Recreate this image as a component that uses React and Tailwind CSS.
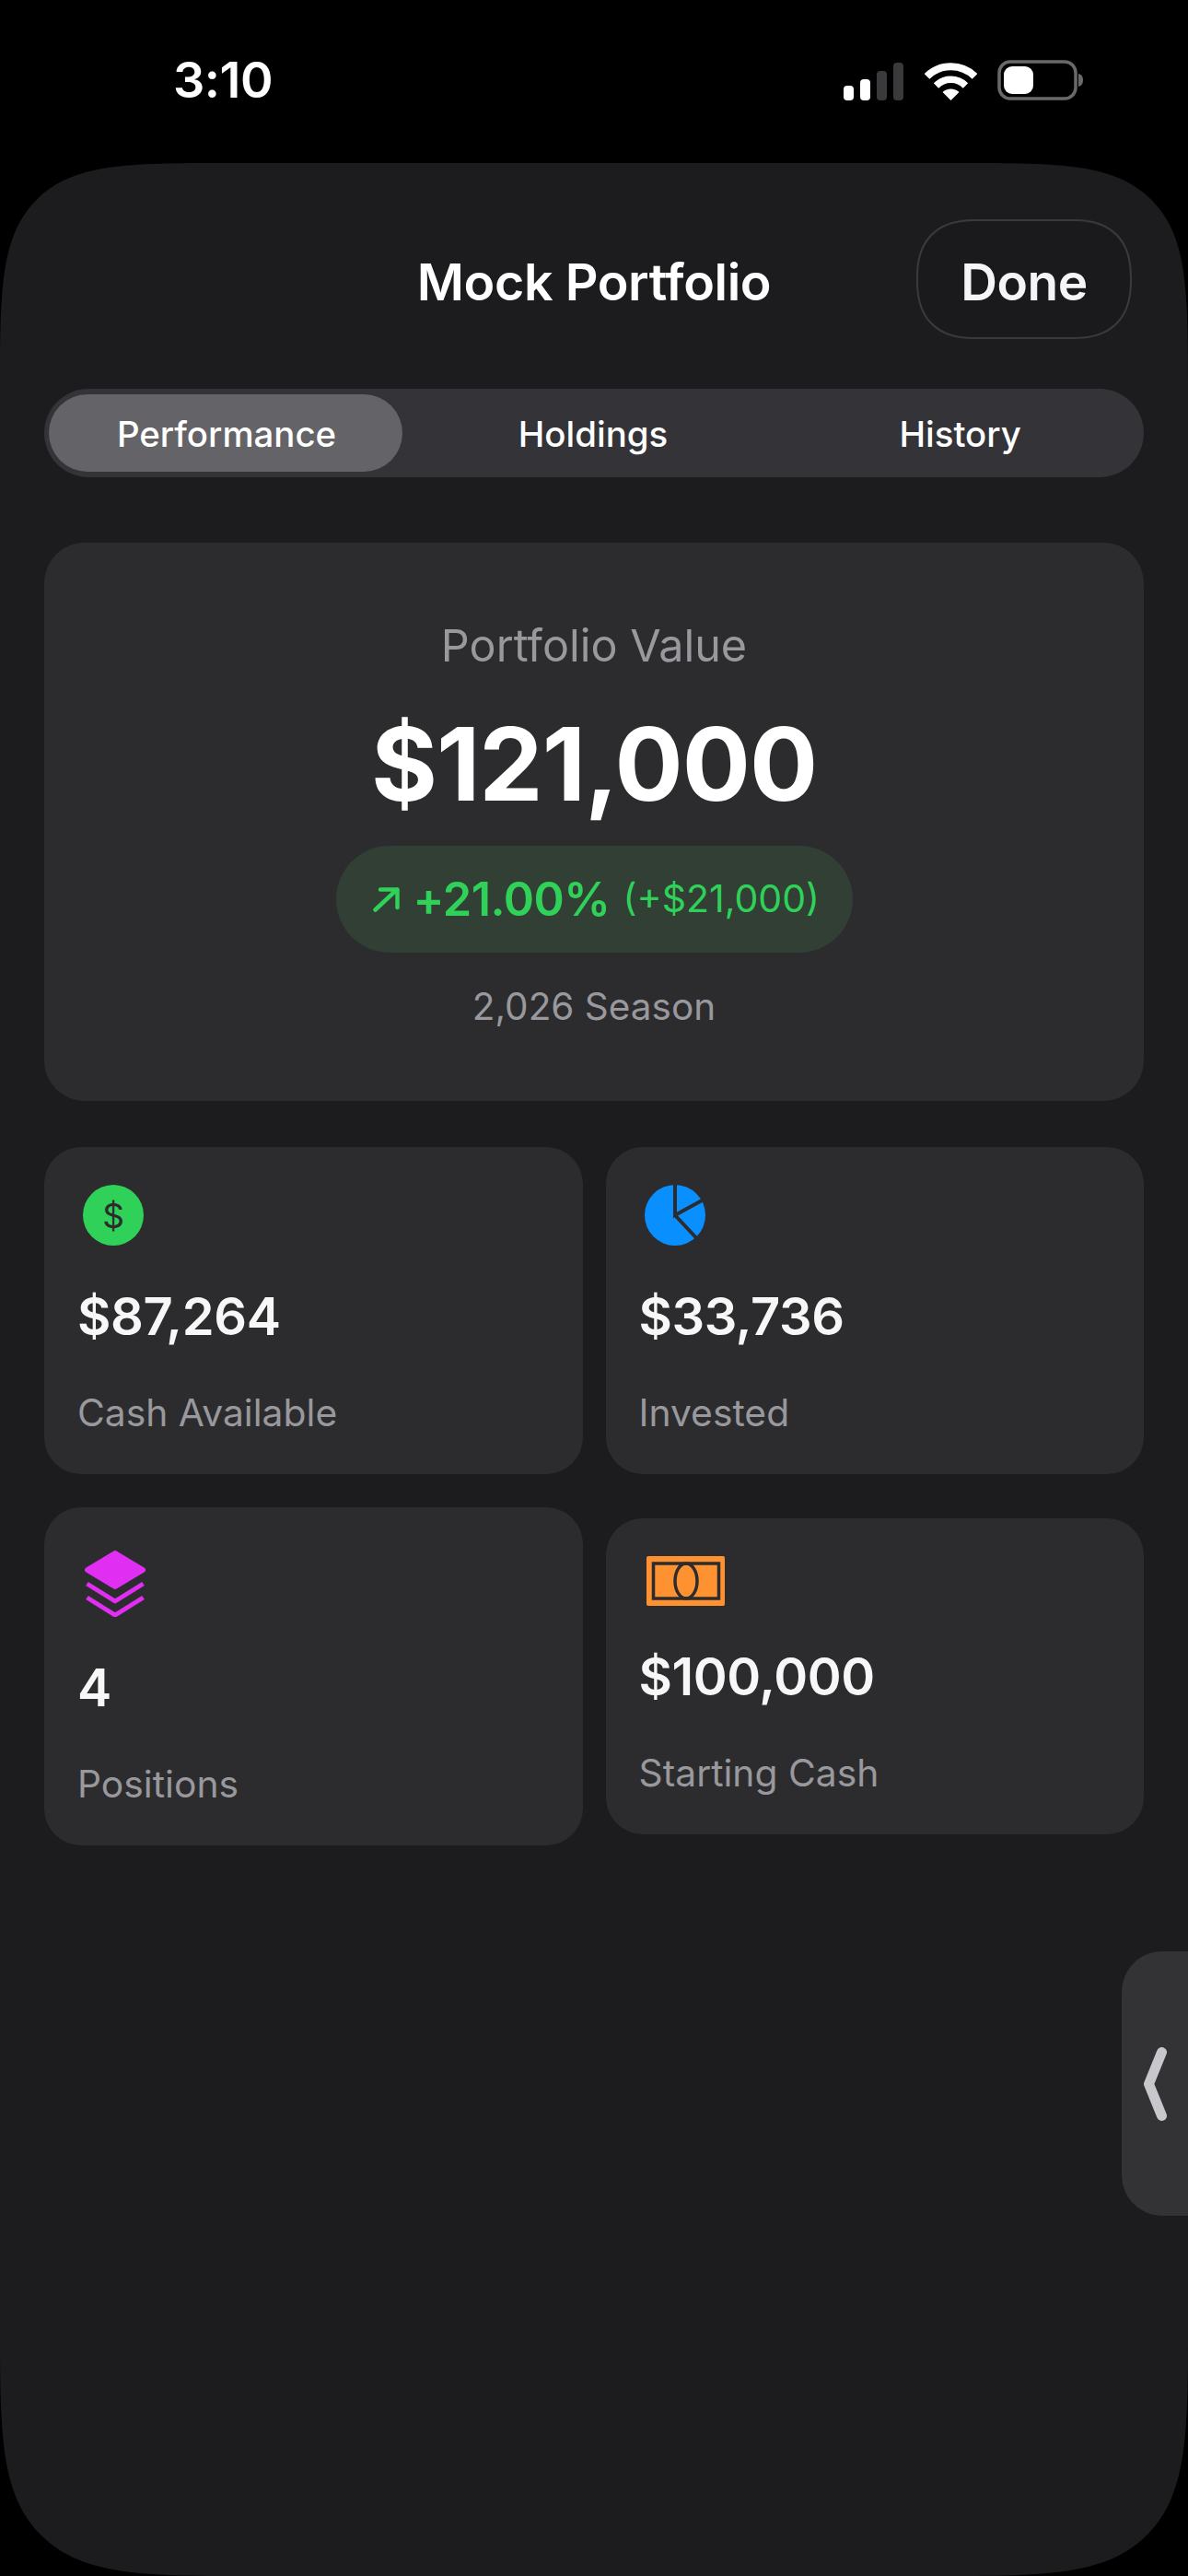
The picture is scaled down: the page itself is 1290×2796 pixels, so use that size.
export default function App() {
  return (
    <div className="relative h-[2796px] w-[1290px] overflow-hidden bg-black font-['Inter','Liberation_Sans',sans-serif] text-white">
      <StatusBar />
      <main className="flex h-[2619px] flex-col rounded-t-[250px] rounded-b-[280px] bg-[#1c1c1e] px-[48px] [corner-shape:squircle]">
        <header className="mx-[13px] mt-[61px] grid h-[130px] grid-cols-[234px_1fr_234px] items-center">
          <div />
          <h1 className="pt-[5px] text-center text-[55.5px] leading-[66px] font-semibold tracking-[-0.4px]">Mock Portfolio</h1>
          <button className="h-[130px] rounded-[65px] border-2 border-[#3a3a3c] bg-[#1a1a1c] pt-[5px] text-[55px] leading-[66px] font-semibold tracking-[-0.5px] text-[#f5f5f7] [corner-shape:superellipse(1.3)]">Done</button>
        </header>

        <nav className="mt-[54px] grid h-[96px] grid-cols-3 items-center rounded-[48px] bg-[#343438] px-[5px] text-[38.4px] leading-[50px] font-medium">
          <div className="flex h-[84px] w-[384px] items-center justify-center rounded-[42px] bg-[#636368] pt-[2px] pl-[2px]">Performance</div>
          <div className="pt-[2px] pr-[2px] text-center">Holdings</div>
          <div className="pt-[2px] pl-[6px] text-center">History</div>
        </nav>

        <section className="mt-[71px] flex h-[606px] flex-col items-center rounded-[44px] bg-[#2c2c2e] pt-[82px]">
          <div className="text-[48.5px] leading-[60px] text-[#98989d]">Portfolio Value</div>
          <div className="mt-[38px] text-[110px] leading-[120px] font-bold tracking-[-1px]">$121,000</div>
          <div className="mt-[29px] flex h-[116px] w-[561px] items-center rounded-[58px] bg-[#313f35] pl-[40px] text-[#30d158]">
            <svg viewBox="0 0 29 27" className="h-[27px] w-[29px]" fill="none" stroke="currentColor" strokeWidth="4.5" strokeLinecap="round" strokeLinejoin="round">
              <path d="M2.5 24.5 L26 2.5 M8 2.5 H26.5 V22" />
            </svg>
            <span className="ml-[15px] text-[50.5px] font-semibold tracking-[-0.5px]">+21.00%</span>
            <span className="ml-[14px] text-[41px]">(+$21,000)</span>
          </div>
          <div className="mt-[29px] text-[40.5px] leading-[60px] text-[#98989d]">2,026 Season</div>
        </section>

        <div className="mt-[50px] grid grid-cols-2 items-center gap-x-[25px] gap-y-[36px]">
          <Stat value="$87,264" label="Cash Available" icon={<Coin />} />
          <Stat value="$33,736" label="Invested" icon={<Pie />} />
          <Stat value="4" label="Positions" icon={<Layers />} />
          <Stat value="$100,000" label="Starting Cash" icon={<Bill />} />
        </div>
      </main>

      <aside className="absolute top-[2118px] right-0 flex h-[287px] w-[72px] items-center rounded-l-[44px] bg-[#333335] pl-[24px]">
        <svg viewBox="0 0 25 80" className="h-[80px] w-[25px]" fill="none" stroke="#c7c7cc" strokeWidth="11" strokeLinecap="round" strokeLinejoin="round">
          <path d="M19.5 5.5 L5.5 40 L19.5 74.5" />
        </svg>
      </aside>
    </div>
  );
}

function StatusBar() {
  return (
    <div className="flex h-[177px] items-start justify-between">
      <div className="mt-[54px] ml-[188px] text-[54px] leading-[66px] font-semibold tracking-[-0.5px]">3:10</div>
      <div className="mt-[65px] mr-[113px] flex items-end">
        <svg viewBox="0 0 65 41" className="h-[41px] w-[65px]" fill="#fff">
          <rect x="0" y="25" width="11" height="16" rx="4" />
          <rect x="18" y="18" width="11" height="23" rx="4" />
          <rect x="36" y="9" width="11" height="32" rx="4" fill="#3a3a3c" />
          <rect x="54" y="0" width="11" height="41" rx="4" fill="#3a3a3c" />
        </svg>
        <svg viewBox="0 0 57 41" className="ml-[23px] h-[41px] w-[57px]" fill="none" stroke="#fff">
          <path d="M2.5 15 A37 37 0 0 1 54.5 15" strokeWidth="8" />
          <path d="M12.5 25 A22.5 22.5 0 0 1 44.5 25" strokeWidth="7.5" />
          <path d="M28.5 41 L19.5 32 A13 13 0 0 1 37.5 32 Z" fill="#fff" stroke="none" />
        </svg>
        <svg viewBox="0 0 94 44" className="ml-[22px] h-[44px] w-[94px]">
          <rect x="2" y="2" width="83" height="40" rx="12" fill="none" stroke="#69696c" strokeWidth="3.5" />
          <rect x="7" y="7" width="32" height="30" rx="9" fill="#fff" />
          <path d="M88 15 C92 16 93 19 93 22 C93 25 92 28 88 29 Z" fill="#69696c" />
        </svg>
      </div>
    </div>
  );
}

function Stat({ value, label, icon }) {
  return (
    <div className="flex flex-col items-start rounded-[40px] bg-[#2c2c2e] pt-[41px] pb-[37px] pl-[37px]">
      {icon}
      <div className="-ml-[1px] mt-[42px] text-[56px] leading-[70px] font-semibold tracking-[-0.4px] text-[#f7f7f7]">{value}</div>
      <div className="-ml-[1px] mt-[39px] text-[40.8px] leading-[60px] text-[#98989d]">{label}</div>
    </div>
  );
}

function Coin() {
  return (
    <div className="ml-[5px] flex h-[66px] w-[66px] items-center justify-center rounded-full bg-[#30d158] text-[37px] leading-none text-[#2c2c2e]">$</div>
  );
}

function Pie() {
  return (
    <svg viewBox="0 0 66 66" className="ml-[5px] h-[66px] w-[66px]">
      <circle cx="33" cy="33" r="33" fill="#0a8fff" />
      <path d="M33 -2 V33 L66 15 M33 33 L62 64" fill="none" stroke="#2c2c2e" strokeWidth="4" />
    </svg>
  );
}

function Layers() {
  return (
    <svg viewBox="0 0 66 72" className="mt-[6px] ml-[7px] h-[72px] w-[66px]" fill="#e02ff2" stroke="#e02ff2" strokeLinejoin="round">
      <path d="M33 3 L63 21 L33 39 L3 21 Z" strokeWidth="6" />
      <path d="M2.5 36 L33 55 L63.5 36" fill="none" strokeWidth="5" />
      <path d="M2.5 51 L33 70 L63.5 51" fill="none" strokeWidth="5" />
    </svg>
  );
}

function Bill() {
  return (
    <svg viewBox="0 0 85 54" className="ml-[7px] h-[54px] w-[85px]">
      <rect width="85" height="54" rx="2" fill="#ff9230" />
      <rect x="7.5" y="8" width="71" height="38" fill="none" stroke="#2c2c2e" strokeWidth="3.5" />
      <ellipse cx="43" cy="27" rx="12" ry="19" fill="none" stroke="#2c2c2e" strokeWidth="3.5" />
    </svg>
  );
}
